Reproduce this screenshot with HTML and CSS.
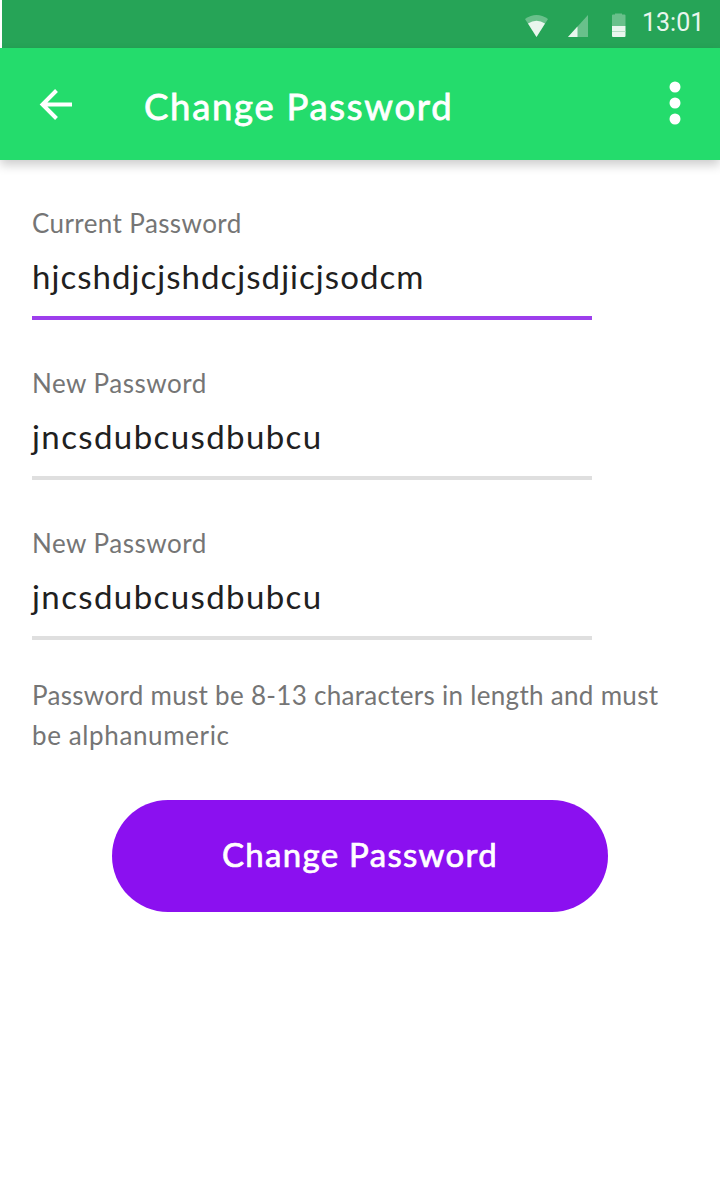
FILE: index.html
```html
<!DOCTYPE html>
<html lang="en">
<head>
<meta charset="utf-8">
<title>Change Password</title>
<link rel="stylesheet" href="styles.css">
</head>
<body>
<div class="status-bar">
  <svg class="status-icons" width="106" height="48" viewBox="0 0 106 48">
    <g fill="#e9f6ee">
      <path opacity=".35" d="M1 19Q12.500 11 24 19L12.500 37Z"/>
      <path d="M4 23.500Q12.500 18 21 23.500L12.500 37Z"/>
      <path opacity=".35" d="M64 15V37H44Z"/>
      <path d="M53.500 26.600V37H44Z"/>
      <path opacity=".35" d="M88 15.500Q88 14.500 89 14.500H91V13.500H98V14.500H100.500Q101.500 14.500 101.500 15.500V26H88Z"/>
      <path d="M88 26H101.500V36Q101.500 37 100.500 37H89Q88 37 88 36Z"/>
    </g>
    <path d="M88 31.500H101.500" stroke="#b5dfc5" stroke-width="1"/>
  </svg>
  <span class="clock">13:01</span>
</div>
<header class="app-bar">
  <svg class="back" width="34" height="34" viewBox="0 0 34 34" fill="none" stroke="#fff" stroke-width="4">
    <path d="M17.500 2.500L3.500 16.500L17.500 30.500M3.500 16.500H33"/>
  </svg>
  <h1 class="title">Change Password</h1>
  <svg class="more" width="12" height="44" viewBox="0 0 12 44" fill="#fff">
    <circle cx="6" cy="6" r="5.500"/><circle cx="6" cy="22" r="5.500"/><circle cx="6" cy="38" r="5.500"/>
  </svg>
</header>
<main class="content">
  <div class="field active"><span class="label current">Current Password</span><span class="value long">hjcshdjcjshdcjsdjicjsodcm</span></div>
  <div class="field"><span class="label">New Password</span><span class="value">jncsdubcusdbubcu</span></div>
  <div class="field"><span class="label">New Password</span><span class="value">jncsdubcusdbubcu</span></div>
  <p class="hint"><span class="rule">Password must be 8-13 characters in length and must</span><br>be alphanumeric</p>
  <button class="submit">Change Password</button>
</main>
</body>
</html>
```
FILE: styles.css
```css
* { box-sizing: border-box; }
body { margin: 0; min-height: 1204px; background: #fff; font-family: Lato, "Open Sans", sans-serif; }
.status-bar { height: 48px; margin-left: 2px; background: #26a457; display: flex; justify-content: flex-end; padding-right: 16px; }
.status-icons { margin-right: 12px; }
.clock { width: 62px; color: #e9f6ee; font: 25px/45px Roboto, sans-serif; white-space: nowrap; }
.app-bar { height: 112px; background: #24dc6c; display: flex; align-items: flex-start; padding-right: 39px; box-shadow: 0 5px 10px rgba(0,0,0,.2); }
.back { margin: 40px 0 0 39px; }
.title { flex: 1; margin: 37px 0 0 71px; color: #fff; font-size: 36.5px; font-weight: 400; line-height: 43px; letter-spacing: 1.7px; -webkit-text-stroke: .8px #fff; white-space: nowrap; }
.more { margin-top: 33px; }
.content { padding: 40px 32px 0; display: flex; flex-direction: column; }
.field { width: 560px; height: 120px; margin-bottom: 40px; border-bottom: 4px solid #dfdfdf; display: flex; flex-direction: column; white-space: nowrap; }
.active { border-color: #9d3eec; }
.label { color: #757575; font-size: 26px; line-height: 46px; letter-spacing: .5px; }
.current { letter-spacing: .4px; }
.value { color: #202020; font-size: 33px; line-height: 60px; letter-spacing: 1.4px; }
.long { letter-spacing: 1.04px; }
.hint { margin: -5px 0 0; color: #757575; font-size: 26px; line-height: 40px; letter-spacing: .62px; white-space: nowrap; }
.rule { letter-spacing: .3px; }
.submit { width: 496px; height: 112px; margin-top: 45px; padding: 0 0 4px; align-self: center; border: 0; border-radius: 56px; background: #8b10f0; color: #fff; font: 400 33px/40px Lato, sans-serif; letter-spacing: 1.3px; -webkit-text-stroke: .7px #fff; }
```
